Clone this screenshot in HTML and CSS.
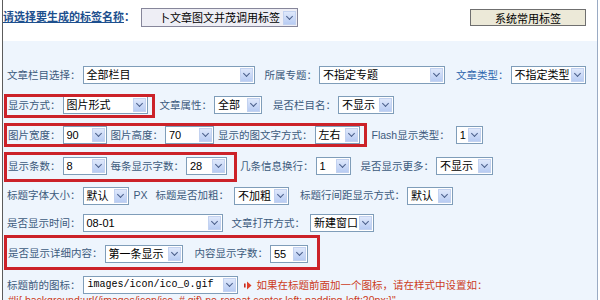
FILE: index.html
```html
<!DOCTYPE html>
<html lang="zh-CN">
<head>
    <meta charset="UTF-8">
    <title>标签生成</title>
    <link rel="stylesheet" href="styles.css">
</head>
<body>
<div class="page">
    <div class="top">
        <a class="top-title">请选择要生成的标签名称</a><span class="top-colon">：</span>
        <span class="sel sel-top"><span class="sel-text">卜文章图文并茂调用标签</span><span class="sel-btn"></span></span>
        <button type="button" class="sys-btn">系统常用标签</button>
    </div>

    <div class="panel">
        <div class="row r1">
            <span class="lbl">文章栏目选择：</span>
            <span class="sel w172"><span class="sel-text">全部栏目</span><span class="sel-btn"></span></span>
            <span class="lbl ml10">所属专题：</span>
            <span class="sel w126"><span class="sel-text">不指定专题</span><span class="sel-btn"></span></span>
            <span class="lbl ml11 blue">文章类型：</span>
            <span class="sel w75"><span class="sel-text">不指定类型</span><span class="sel-btn"></span></span>
        </div>
        <div class="row r2">
            <span class="lbl ml1">显示方式：</span>
            <span class="sel w85"><span class="sel-text">图片形式</span><span class="sel-btn"></span></span>
            <span class="lbl ml12">文章属性：</span>
            <span class="sel w48"><span class="sel-text">全部</span><span class="sel-btn"></span></span>
            <span class="lbl ml11">是否栏目名：</span>
            <span class="sel w56"><span class="sel-text">不显示</span><span class="sel-btn"></span></span>
        </div>
        <div class="row r3">
            <span class="lbl ml1">图片宽度：</span>
            <span class="sel w44"><span class="sel-text">90</span><span class="sel-btn"></span></span>
            <span class="lbl ml4">图片高度：</span>
            <span class="sel w49"><span class="sel-text">70</span><span class="sel-btn"></span></span>
            <span class="lbl ml4">显示的图文字方式：</span>
            <span class="sel w45"><span class="sel-text">左右</span><span class="sel-btn"></span></span>
            <span class="lbl ml12">Flash显示类型：</span>
            <span class="sel ml6 w27"><span class="sel-text">1</span><span class="sel-btn"></span></span>
        </div>
        <div class="row r4">
            <span class="lbl ml1">显示条数：</span>
            <span class="sel w44"><span class="sel-text">8</span><span class="sel-btn"></span></span>
            <span class="lbl ml4">每条显示字数：</span>
            <span class="sel w41"><span class="sel-text">28</span><span class="sel-btn"></span></span>
            <span class="lbl ml13">几条信息换行：</span>
            <span class="sel w35"><span class="sel-text">1</span><span class="sel-btn"></span></span>
            <span class="lbl ml10">是否显示更多：</span>
            <span class="sel w57"><span class="sel-text">不显示</span><span class="sel-btn"></span></span>
        </div>
        <div class="row r5">
            <span class="lbl">标题字体大小：</span>
            <span class="sel w46"><span class="sel-text">默认</span><span class="sel-btn"></span></span>
            <span class="lbl ml5">PX</span>
            <span class="lbl ml8">标题是否加粗：</span>
            <span class="sel ml5 w55"><span class="sel-text">不加粗</span><span class="sel-btn"></span></span>
            <span class="lbl ml11">标题行间距显示方式：</span>
            <span class="sel w46"><span class="sel-text">默认</span><span class="sel-btn"></span></span>
        </div>
        <div class="row r6">
            <span class="lbl">是否显示时间：</span>
            <span class="sel w140"><span class="sel-text">08-01</span><span class="sel-btn"></span></span>
            <span class="lbl ml9">文章打开方式：</span>
            <span class="sel ml5 w64"><span class="sel-text">新建窗口</span><span class="sel-btn"></span></span>
        </div>
        <div class="row r7">
            <span class="lbl ml1">是否显示详细内容：</span>
            <span class="sel w78"><span class="sel-text">第一条显示</span><span class="sel-btn"></span></span>
            <span class="lbl ml12">内容显示字数：</span>
            <span class="sel w38"><span class="sel-text">55</span><span class="sel-btn"></span></span>
        </div>
        <div class="row r8">
            <span class="lbl">标题前的图标：</span>
            <span class="sel w155 mono"><span class="sel-text">images/icon/ico_0.gif</span><span class="sel-btn"></span></span>
            <svg class="tip-icon" width="8" height="9" viewBox="0 0 8 9">
                <rect x="0" y="2.5" width="1.6" height="4" fill="#c4281c"/>
                <polygon points="3,0.5 7.5,4.5 3,8.5" fill="#e0402a"/>
            </svg>
            <span class="tip">如果在标题前面加一个图标，请在样式中设置如：</span>
        </div>
        <div class="tip tip-code">#li{ background:url(/images/icon/ico_#.gif) no-repeat center left; padding-left:20px;}"</div>

        <!-- red annotation frames -->
        <div class="mark m2"></div>
        <div class="mark m3"></div>
        <div class="mark m4"></div>
        <div class="mark m7"></div>
    </div>
</div>
</body>
</html>
```

FILE: styles.css
```css
* {
    box-sizing: border-box;
}
body {
    margin: 0;
    width: 600px;
    height: 300px;
    overflow: hidden;
    background: #fff;
    font-family: "Liberation Sans", "Noto Sans CJK SC", sans-serif;
    font-size: 10.5px;
    color: #3c5a7c;
}
.page {
    margin-left: 2px;
    width: 596px;
    height: 300px;
    border-left: 1px solid #5c5c5c;
    border-right: 1px solid #9aabc4;
}
.top {
    display: flex;
    align-items: flex-start;
    height: 41px;
    padding: 8px 11px 0 0;
    background: #fff;
}
.top-title,
.top-colon {
    font-size: 11px;
    font-weight: bold;
    line-height: 19px;
    color: #1d4f8e;
}
.top-title {
    text-decoration: underline;
}
.sys-btn {
    margin-left: auto;
    margin-top: 1px;
    width: 116px;
    height: 17px;
    padding: 0;
    border: 1px solid #6f6f6f;
    background: #ece9d8;
    font-family: "Liberation Sans", "Noto Sans CJK SC", sans-serif;
    font-size: 11px;
    color: #000;
}
.panel {
    position: relative;
    height: 259px;
    padding-top: 19px;
    background: #eef5fd;
}
.row {
    display: flex;
    align-items: center;
    height: 30px;
    padding-left: 4px;
}
.r4 { height: 32px; }
.r5 { height: 27px; }
.r6 { height: 28px; }
.r7 { height: 33px; }
.r8 {
    height: 24px;
    align-items: flex-end;
}
.lbl {
    white-space: nowrap;
    line-height: 17px;
}
.blue {
    color: #2d65ad;
}
.sel {
    display: inline-flex;
    align-items: center;
    flex: none;
    height: 18px;
    margin-left: 2px;
    border: 1px solid #7f9db9;
    background: #fff;
    color: #000;
    font-size: 11px;
}
.sel-text {
    flex: 1;
    overflow: hidden;
    padding-left: 3px;
    white-space: nowrap;
    line-height: 16px;
}
.sel-btn {
    display: flex;
    align-items: center;
    justify-content: center;
    flex: none;
    width: 13px;
    height: 14px;
    margin-right: 1px;
    border: 1px solid #c3d2f0;
    background: linear-gradient(#dfe8fb, #b8ccf3);
}
.sel-btn::after {
    content: "";
    width: 4px;
    height: 4px;
    margin-top: -3px;
    border-right: 1.5px solid #4b5f8a;
    border-bottom: 1.5px solid #4b5f8a;
    transform: rotate(45deg);
}
.sel-top {
    margin-left: 6px;
    width: 157px;
    height: 19px;
    border-color: #86869a;
    background: #eeeef5;
}
.sel-top .sel-text {
    padding-left: 17px;
    font-size: 11px;
}
.mono .sel-text {
    font-family: "Liberation Mono", monospace;
    font-size: 10px;
    padding-left: 4px;
}
.tip-icon {
    margin: 0 0 4px 6px;
    flex: none;
}
.tip {
    margin-left: 5px;
    line-height: 17px;
    white-space: nowrap;
    color: #cc3c1c;
}
.tip-code {
    margin-left: 5px;
    line-height: 12px;
}
.mark {
    position: absolute;
    left: 1px;
    border: 3px solid #cc2229;
}
.m2 { top: 53px; width: 151px; height: 24px; }
.m3 { top: 82px; width: 363px; height: 24px; }
.m4 { top: 111px; width: 233px; height: 30px; }
.m7 { top: 194px; width: 316px; height: 35px; }

.w27 { width: 27px; }
.w35 { width: 35px; }
.w38 { width: 38px; }
.w41 { width: 41px; }
.w44 { width: 44px; }
.w45 { width: 45px; }
.w46 { width: 46px; }
.w48 { width: 48px; }
.w49 { width: 49px; }
.w55 { width: 55px; }
.w56 { width: 56px; }
.w57 { width: 57px; }
.w64 { width: 64px; }
.w75 { width: 75px; }
.w78 { width: 78px; }
.w85 { width: 85px; }
.w126 { width: 126px; }
.w140 { width: 140px; }
.w155 { width: 155px; }
.w172 { width: 172px; }

.ml1 { margin-left: 1px; }
.ml4 { margin-left: 4px; }
.ml5 { margin-left: 5px; }
.ml6 { margin-left: 6px; }
.ml8 { margin-left: 8px; }
.ml9 { margin-left: 9px; }
.ml10 { margin-left: 10px; }
.ml11 { margin-left: 11px; }
.ml12 { margin-left: 12px; }
.ml13 { margin-left: 13px; }
```
